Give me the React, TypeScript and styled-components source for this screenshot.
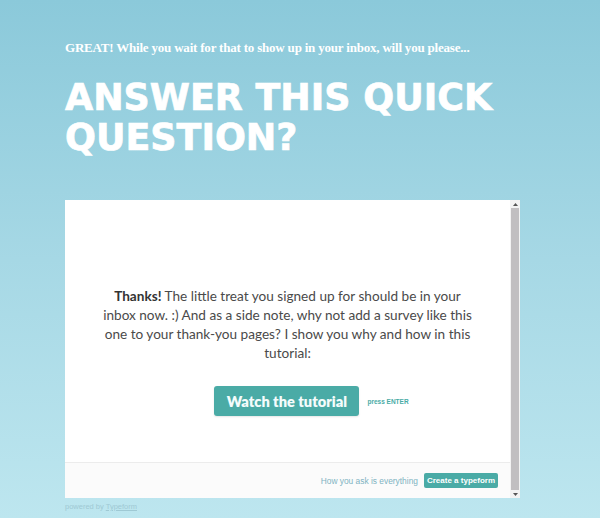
import React from "react";
import styled, { createGlobalStyle } from "styled-components";

const Global = createGlobalStyle`
  html, body { margin: 0; padding: 0; }
  body {
    width: 600px;
    height: 518px;
    overflow: hidden;
    background: linear-gradient(180deg, #8bc9da 0%, #a6d8e5 50%, #bde6ef 100%);
  }
`;

const Page = styled.div`
  width: 600px;
  height: 518px;
  box-sizing: border-box;
  padding: 40px 0 0 65px;
  display: flex;
  flex-direction: column;
`;

const Lead = styled.div`
  font-family: "Liberation Serif", serif;
  font-weight: 700;
  font-size: 13px;
  letter-spacing: -0.2px;
  color: #ffffff;
  line-height: 16px;
`;

const Title = styled.h1`
  margin: 22px 0 0 0;
  font-family: "DejaVu Sans", sans-serif;
  font-weight: 700;
  font-size: 36.4px;
  line-height: 40px;
  letter-spacing: 0;
  color: #ffffff;
  -webkit-text-stroke: 0.7px #ffffff;
`;

const Frame = styled.div`
  margin-top: 42px;
  width: 455px;
  height: 298px;
  display: flex;
  background: #ffffff;
`;

const Content = styled.div`
  flex: 1;
  display: flex;
  flex-direction: column;
`;

const Main = styled.div`
  flex: 1;
  display: flex;
  flex-direction: column;
  align-items: center;
  padding-top: 87px;
`;

const Message = styled.p`
  margin: 0;
  text-align: center;
  font-family: "Lato", sans-serif;
  font-size: 13.6px;
  line-height: 19px;
  color: #4a4a4a;
`;

const Strong = styled.b`
  font-weight: 700;
  color: #333333;
`;

const ActionRow = styled.div`
  margin-top: 23px;
  display: flex;
  align-items: center;
  gap: 8px;
  margin-left: 48px;
`;

const Watch = styled.button`
  width: 145px;
  height: 30px;
  border: none;
  border-radius: 3px;
  background: #4aaba6;
  color: #f4fcfc;
  font-family: "Lato", sans-serif;
  font-weight: 800;
  font-size: 14.6px;
  padding: 0;
  box-shadow: 0 1px 2px rgba(0, 0, 0, 0.1);
`;

const Hint = styled.span`
  font-family: "Liberation Sans", sans-serif;
  font-size: 6.5px;
  color: #4aaba6;
  font-weight: 700;
`;

const Footer = styled.div`
  height: 36px;
  box-sizing: border-box;
  border-top: 1px solid #ececec;
  background: #fbfbfb;
  display: flex;
  align-items: center;
  justify-content: flex-end;
  padding-right: 12px;
  gap: 6px;
`;

const Tagline = styled.span`
  font-family: "Liberation Sans", sans-serif;
  font-size: 8.4px;
  color: #7fb3c2;
`;

const Create = styled.span`
  background: #4aaba6;
  color: #ffffff;
  font-family: "Liberation Sans", sans-serif;
  font-weight: 700;
  font-size: 8px;
  height: 15px;
  line-height: 15px;
  padding: 0 3px;
  border-radius: 2px;
`;

const Scrollbar = styled.div`
  width: 10px;
  display: flex;
  flex-direction: column;
  align-items: center;
  background: #f3f3f3;
`;

const Arrow = styled.div`
  height: 8px;
  display: flex;
  align-items: center;
  justify-content: center;
`;

const Thumb = styled.div`
  flex: 1;
  width: 8px;
  background: #c1bfc1;
`;

const Powered = styled.div`
  margin-top: 4px;
  font-family: "Liberation Sans", sans-serif;
  font-size: 7.5px;
  color: #9fc9d4;
`;

const PoweredLink = styled.span`
  text-decoration: underline;
`;

export default function App() {
  return (
    <>
      <Global />
      <Page>
        <Lead>GREAT! While you wait for that to show up in your inbox, will you please...</Lead>
        <Title>
          ANSWER THIS QUICK
          <br />
          QUESTION?
        </Title>
        <Frame>
          <Content>
            <Main>
              <Message>
                <Strong>Thanks!</Strong> The little treat you signed up for should be in your
                <br />
                inbox now. :) And as a side note, why not add a survey like this
                <br />
                one to your thank-you pages? I show you why and how in this
                <br />
                tutorial:
              </Message>
              <ActionRow>
                <Watch>Watch the tutorial</Watch>
                <Hint>press ENTER</Hint>
              </ActionRow>
            </Main>
            <Footer>
              <Tagline>How you ask is everything</Tagline>
              <Create>Create a typeform</Create>
            </Footer>
          </Content>
          <Scrollbar>
            <Arrow>
              <svg width="5" height="3" viewBox="0 0 5 3">
                <path d="M0 3 L2.5 0 L5 3 Z" fill="#555" />
              </svg>
            </Arrow>
            <Thumb />
            <Arrow>
              <svg width="5" height="3" viewBox="0 0 5 3">
                <path d="M0 0 L2.5 3 L5 0 Z" fill="#555" />
              </svg>
            </Arrow>
          </Scrollbar>
        </Frame>
        <Powered>
          powered by <PoweredLink>Typeform</PoweredLink>
        </Powered>
      </Page>
    </>
  );
}
